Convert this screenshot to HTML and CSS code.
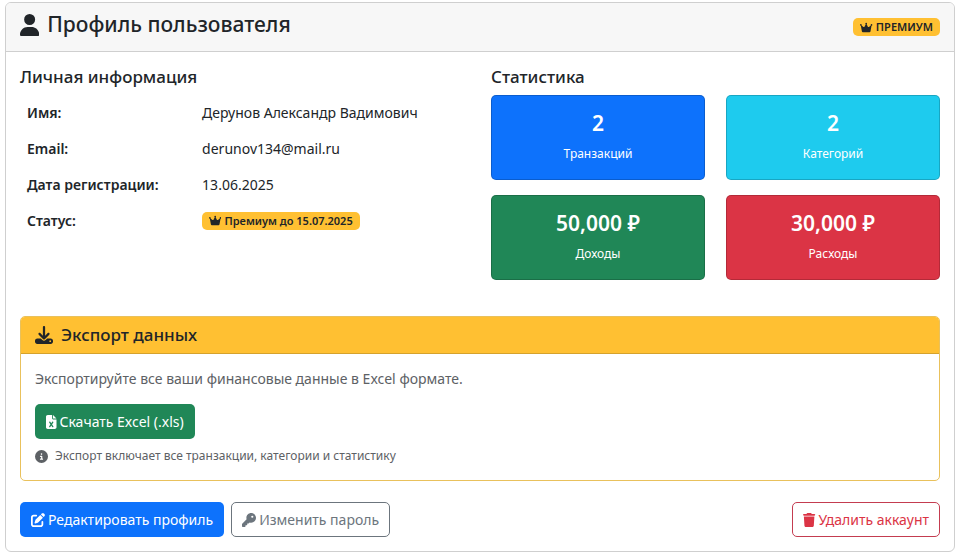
FILE: index.html
```html
<!DOCTYPE html>
<html lang="ru">
<head>
<meta charset="utf-8">
<meta name="viewport" content="width=device-width, initial-scale=1">
<title>Профиль пользователя</title>
<link rel="stylesheet" href="styles.css">
</head>
<body>
<main class="profile">
  <header class="profile-header">
    <h1 class="profile-title"><svg class="icon" viewBox="0 0 448 512" aria-hidden="true"><path d="M224 256A128 128 0 1 0 224 0a128 128 0 1 0 0 256zm-45.700 48C79.800 304 0 383.800 0 482.300C0 498.700 13.300 512 29.700 512l388.600 0c16.400 0 29.700-13.300 29.700-29.700C448 383.800 368.200 304 269.700 304l-91.400 0z"/></svg>Профиль пользователя</h1>
    <span class="badge"><svg class="icon" viewBox="0 0 576 512" aria-hidden="true"><path d="M309 106c11.400-7 19-19.700 19-34c0-22.100-17.900-40-40-40s-40 17.900-40 40c0 14.400 7.600 27 19 34L209.700 220.600c-9.100 18.200-32.700 23.400-48.600 10.700L72 160c5-6.700 8-15 8-24c0-22.100-17.900-40-40-40S0 113.900 0 136s17.900 40 40 40c.2 0 .5 0 .7 0L86.400 427.400c5.500 30.400 32 52.600 63 52.600l277.200 0c30.900 0 57.400-22.100 63-52.600L535.300 176c.2 0 .5 0 .7 0c22.100 0 40-17.900 40-40s-17.900-40-40-40s-40 17.900-40 40c0 9 3 17.300 8 24l-89.100 71.300c-15.900 12.700-39.500 7.500-48.600-10.700L309 106z"/></svg>ПРЕМИУМ</span>
  </header>
  <div class="profile-body">
    <div class="columns">
      <section>
        <h2 class="section-title">Личная информация</h2>
        <table class="info">
          <tbody>
            <tr><th scope="row">Имя:</th><td>Дерунов Александр Вадимович</td></tr>
            <tr><th scope="row">Email:</th><td>derunov134@mail.ru</td></tr>
            <tr><th scope="row">Дата регистрации:</th><td>13.06.2025</td></tr>
            <tr><th scope="row">Статус:</th><td><span class="badge"><svg class="icon" viewBox="0 0 576 512" aria-hidden="true"><path d="M309 106c11.400-7 19-19.700 19-34c0-22.100-17.900-40-40-40s-40 17.900-40 40c0 14.400 7.600 27 19 34L209.700 220.600c-9.100 18.200-32.700 23.400-48.600 10.700L72 160c5-6.700 8-15 8-24c0-22.100-17.900-40-40-40S0 113.900 0 136s17.900 40 40 40c.2 0 .5 0 .7 0L86.400 427.400c5.500 30.400 32 52.600 63 52.600l277.200 0c30.900 0 57.400-22.100 63-52.600L535.300 176c.2 0 .5 0 .7 0c22.100 0 40-17.900 40-40s-17.900-40-40-40s-40 17.900-40 40c0 9 3 17.300 8 24l-89.100 71.300c-15.900 12.700-39.500 7.500-48.600-10.700L309 106z"/></svg>Премиум до 15.07.2025</span></td></tr>
          </tbody>
        </table>
      </section>
      <section>
        <h2 class="section-title">Статистика</h2>
        <div class="stats">
          <div class="stat stat-primary"><strong class="stat-value">2</strong><span class="stat-label">Транзакций</span></div>
          <div class="stat stat-info"><strong class="stat-value">2</strong><span class="stat-label">Категорий</span></div>
          <div class="stat stat-success"><strong class="stat-value">50,000 ₽</strong><span class="stat-label">Доходы</span></div>
          <div class="stat stat-danger"><strong class="stat-value">30,000 ₽</strong><span class="stat-label">Расходы</span></div>
        </div>
      </section>
    </div>
    <section class="export">
      <h2 class="export-title"><svg class="icon" viewBox="0 0 512 512" aria-hidden="true"><path d="M288 32c0-17.700-14.300-32-32-32s-32 14.300-32 32l0 242.700-73.400-73.400c-12.500-12.500-32.800-12.500-45.300 0s-12.500 32.800 0 45.300l128 128c12.500 12.500 32.800 12.500 45.300 0l128-128c12.500-12.500 12.500-32.800 0-45.300s-32.800-12.500-45.300 0L288 274.700 288 32zM64 352c-35.300 0-64 28.700-64 64l0 32c0 35.300 28.700 64 64 64l384 0c35.300 0 64-28.700 64-64l0-32c0-35.300-28.700-64-64-64l-101.500 0-45.300 45.300c-25 25-65.500 25-90.500 0L165.500 352 64 352zm368 56a24 24 0 1 1 0 48 24 24 0 1 1 0-48z"/></svg>Экспорт данных</h2>
      <div class="export-body">
        <p class="export-text">Экспортируйте все ваши финансовые данные в Excel формате.</p>
        <button type="button" class="btn btn-success"><svg class="icon" viewBox="0 0 384 512" aria-hidden="true"><path d="M64 0C28.700 0 0 28.700 0 64L0 448c0 35.300 28.700 64 64 64l256 0c35.300 0 64-28.700 64-64l0-288-128 0c-17.700 0-32-14.300-32-32L224 0 64 0zM256 0l0 128 128 0L256 0zM155.700 250.200L192 302.100l36.300-51.900c7.600-10.900 22.600-13.500 33.400-5.900s13.500 22.600 5.900 33.400L221.300 344l46.400 66.200c7.600 10.900 5 25.800-5.900 33.400s-25.800 5-33.400-5.900L192 385.800l-36.300 51.900c-7.600 10.900-22.600 13.500-33.400 5.900s-13.500-22.600-5.900-33.400L162.700 344l-46.400-66.200c-7.600-10.900-5-25.800 5.900-33.400s25.800-5 33.400 5.900z"/></svg>Скачать Excel (.xls)</button>
        <p class="export-note"><svg class="icon" viewBox="0 0 512 512" aria-hidden="true"><path d="M256 512A256 256 0 1 0 256 0a256 256 0 1 0 0 512zM216 336l24 0 0-64-24 0c-13.300 0-24-10.700-24-24s10.700-24 24-24l48 0c13.300 0 24 10.700 24 24l0 88 8 0c13.300 0 24 10.700 24 24s-10.700 24-24 24l-80 0c-13.300 0-24-10.700-24-24s10.700-24 24-24zm40-208a32 32 0 1 1 0 64 32 32 0 1 1 0-64z"/></svg>Экспорт включает все транзакции, категории и статистику</p>
      </div>
    </section>
    <div class="actions">
      <button type="button" class="btn btn-primary"><svg class="icon" viewBox="0 0 512 512" aria-hidden="true"><path d="M471.600 21.700c-21.900-21.900-57.300-21.900-79.200 0L362.300 51.700l97.900 97.900 30.100-30.100c21.900-21.900 21.900-57.300 0-79.200L471.600 21.700zm-299.200 220c-6.100 6.100-10.800 13.600-13.500 21.900l-29.600 88.800c-2.900 8.600-.6 18.100 5.800 24.600s15.900 8.700 24.600 5.800l88.800-29.600c8.200-2.700 15.700-7.400 21.900-13.500L437.700 172.300 339.700 74.300 172.400 241.700zM96 64C43 64 0 107 0 160L0 416c0 53 43 96 96 96l256 0c53 0 96-43 96-96l0-96c0-17.700-14.300-32-32-32s-32 14.300-32 32l0 96c0 17.700-14.300 32-32 32L96 448c-17.700 0-32-14.300-32-32l0-256c0-17.700 14.300-32 32-32l96 0c17.700 0 32-14.300 32-32s-14.300-32-32-32L96 64z"/></svg>Редактировать профиль</button>
      <button type="button" class="btn btn-outline"><svg class="icon" viewBox="0 0 512 512" aria-hidden="true"><path d="M336 352c97.200 0 176-78.800 176-176S433.200 0 336 0S160 78.800 160 176c0 18.700 2.900 36.800 8.300 53.700L7 391c-4.500 4.500-7 10.600-7 17l0 80c0 13.300 10.700 24 24 24l80 0c13.300 0 24-10.700 24-24l0-40 40 0c13.300 0 24-10.700 24-24l0-40 40 0c6.400 0 12.500-2.500 17-7l33.300-33.300c16.900 5.400 35 8.300 53.700 8.300zM376 96a40 40 0 1 1 0 80 40 40 0 1 1 0-80z"/></svg>Изменить пароль</button>
      <button type="button" class="btn btn-outline-danger"><svg class="icon" viewBox="0 0 448 512" aria-hidden="true"><path d="M135.200 17.700L128 32 32 32C14.300 32 0 46.300 0 64S14.300 96 32 96l384 0c17.700 0 32-14.300 32-32s-14.300-32-32-32l-96 0-7.200-14.300C307.400 6.800 296.300 0 284.200 0L163.800 0c-12.100 0-23.200 6.800-28.600 17.700zM416 128L32 128 53.200 467c1.600 25.300 22.600 45 47.900 45l245.800 0c25.300 0 46.300-19.700 47.900-45L416 128z"/></svg>Удалить аккаунт</button>
    </div>
  </div>
</main>
</body>
</html>
```
FILE: styles.css
```css
* {
  box-sizing: border-box;
}

body {
  margin: 0;
  padding: 2px 4px 5px 5px;
  background: #fff;
  color: #212529;
  font: 14px/22px "Noto Sans", "Open Sans", sans-serif;
}

h1,
h2,
p {
  margin: 0;
}

.icon {
  flex: none;
  height: 1em;
  fill: currentColor;
}

.profile {
  border: 1px solid #cfcfcf;
  border-radius: 6px;
}

.profile-header {
  display: flex;
  align-items: center;
  justify-content: space-between;
  padding: 7px 14px;
  border-bottom: 1px solid #cfcfcf;
  border-radius: 5px 5px 0 0;
  background: #f7f7f7;
}

.profile-title {
  display: flex;
  align-items: center;
  gap: 8px;
  margin-bottom: 5px;
  font-size: 21px;
  font-weight: 500;
  line-height: 29px;
}

.profile-title .icon {
  height: 22px;
}

.profile-body {
  padding: 14px;
}

.badge {
  display: inline-flex;
  align-items: center;
  gap: 3px;
  padding: 0 7px;
  border-radius: 5px;
  background: #ffc032;
  font-size: 11px;
  font-weight: 600;
  line-height: 18px;
}

.columns {
  display: grid;
  grid-template-columns: 1fr 1fr;
  gap: 22px;
  margin-bottom: 36px;
}

.section-title {
  margin-bottom: 7px;
  font-size: 17px;
  font-weight: 500;
  line-height: 22px;
}

.info {
  width: 100%;
  border-collapse: collapse;
}

.info th,
.info td {
  padding: 7px;
  text-align: left;
  vertical-align: top;
}

.info th {
  width: 39%;
  font-weight: 600;
}

.stats {
  display: grid;
  grid-template-columns: 1fr 1fr;
  gap: 15px 21px;
}

.stat {
  display: flex;
  flex-direction: column;
  gap: 7px;
  padding: 14px;
  border: 1px solid rgba(0, 0, 0, 0.18);
  border-radius: 5px;
  color: #fff;
  text-align: center;
}

.stat-value {
  font-size: 21px;
  font-weight: 600;
  line-height: 26px;
}

.stat-label {
  font-size: 12px;
}

.stat-primary,
.btn-primary {
  background-color: #0d72fc;
}

.stat-info {
  background-color: #1ecbee;
}

.stat-success,
.btn-success {
  background-color: #208757;
}

.stat-danger {
  background-color: #db3445;
}

.export {
  margin-bottom: 21px;
  border: 1px solid #e9c15c;
  border-radius: 5px;
}

.export-title {
  display: flex;
  align-items: center;
  gap: 8px;
  padding: 7px 14px;
  border-bottom: 1px solid #d5a22c;
  border-radius: 4px 4px 0 0;
  background: #ffc032;
  font-size: 17px;
  font-weight: 500;
  line-height: 22px;
}

.export-title .icon {
  height: 18px;
}

.export-body {
  padding: 14px;
}

.export-text {
  margin-bottom: 14px;
  color: #5d6165;
}

.export-note {
  display: flex;
  align-items: center;
  gap: 7px;
  margin-top: 7px;
  color: #5d6165;
  font-size: 12px;
  line-height: 20px;
}

.export-note .icon {
  height: 13px;
}

.actions {
  display: flex;
  gap: 7px;
}

.btn {
  display: inline-flex;
  align-items: center;
  gap: 3px;
  padding: 5px 10px;
  border: 1px solid transparent;
  border-radius: 5px;
  color: #fff;
  font: inherit;
  line-height: 23px;
  cursor: pointer;
}

.btn .icon {
  height: 14px;
}

.btn-outline {
  border-color: #6c757d;
  background: #fff;
  color: #6c757d;
}

.btn-outline-danger {
  margin-left: auto;
  border-color: #c43c50;
  background: #fff;
  color: #db3445;
}
```
